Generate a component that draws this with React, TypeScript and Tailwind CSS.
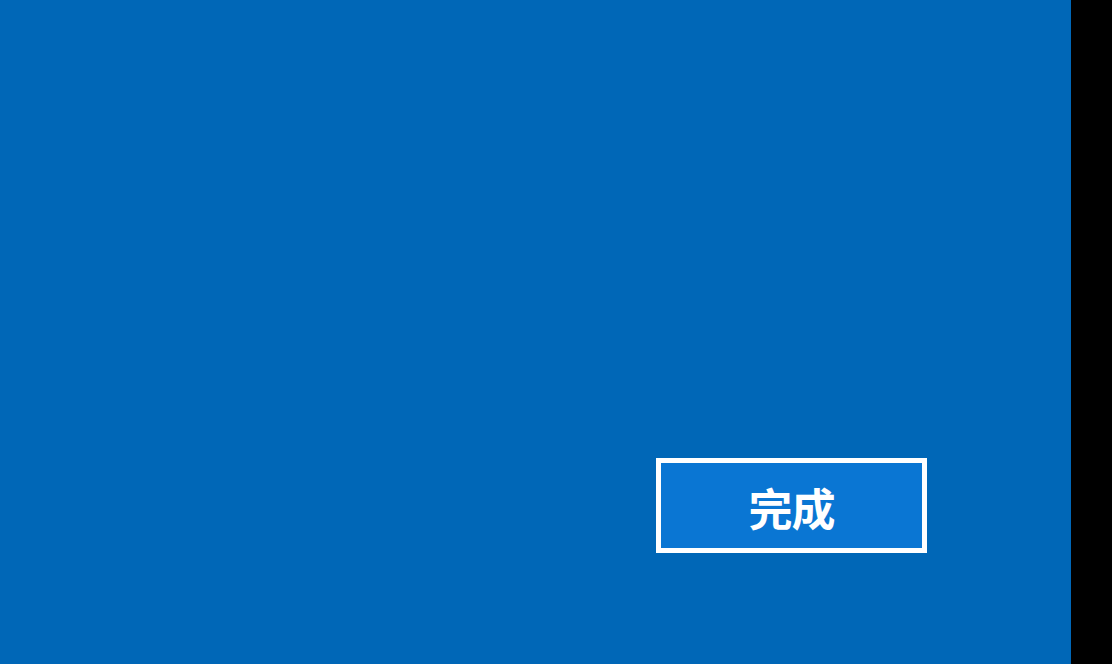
export default function App() {
  return (
    <div className="flex h-[664px] w-[1112px] bg-black font-['Noto_Sans_CJK_SC',sans-serif]">
      <div className="flex h-full w-[1071px] items-end justify-end bg-[#0067b7] pb-[111px] pr-[144px]">
        <button className="flex h-[95px] w-[271px] items-center justify-center border-[5px] border-white bg-[#0a76d3] pt-[3px] text-[44px] font-bold leading-none tracking-[-1px] text-white">
          完成
        </button>
      </div>
    </div>
  );
}
